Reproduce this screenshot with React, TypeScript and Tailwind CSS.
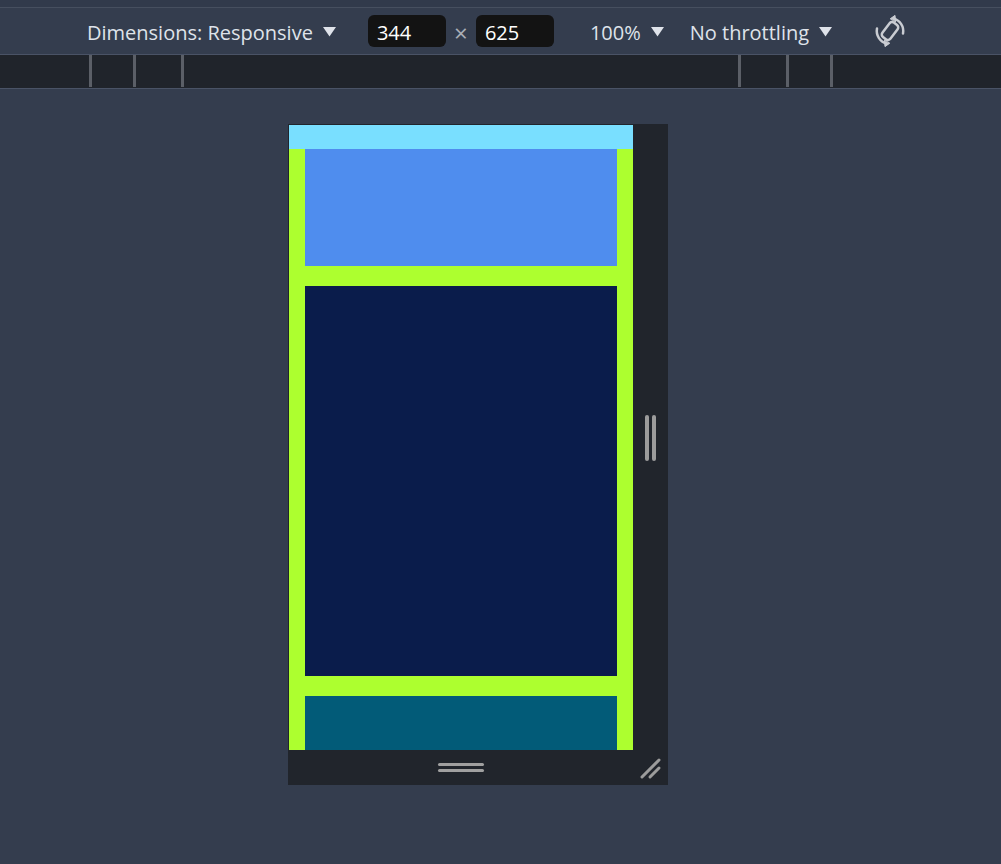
import React from 'react';

const Caret = () => (
  <svg width="13" height="10" viewBox="0 0 13 10" className="ml-[10px] mt-[2px]">
    <path d="M0 0 L13 0 L6.5 9.5 Z" fill="#dfe3ea" />
  </svg>
);

const RotateIcon = () => (
  <svg width="34" height="34" viewBox="0 0 34 34" fill="none" stroke="#c9ccd2" strokeWidth="2.5" strokeLinecap="round">
    {/* phone */}
    <rect x="12" y="8" width="10" height="18" rx="3" transform="rotate(37 17 17)" />
    {/* arrow arcs */}
    <path d="M30 19.5 A13 13 0 0 0 20 4.4" />
    <path d="M17.5 4.6 L22 1.4 L22.6 7.6 Z" fill="#c9ccd2" strokeWidth="1" strokeLinejoin="round" />
    <path d="M4 14.5 A13 13 0 0 0 14 29.6" />
    <path d="M16.5 29.4 L12 32.6 L11.4 26.4 Z" fill="#c9ccd2" strokeWidth="1" strokeLinejoin="round" />
  </svg>
);

const Tick = () => <div className="w-[3px] h-full bg-[#5b5f67]" />;

export default function App() {
  return (
    <div className="w-[1001px] h-[864px] bg-[#343d4e] overflow-hidden font-['Open_Sans','Noto_Sans',sans-serif] text-[#dfe3ea]">
      {/* top strip */}
      <div className="h-[7px] bg-[#313a4b]" />
      <div className="h-px bg-[#464f5f]" />

      {/* toolbar */}
      <div className="h-[47px] flex items-center text-[20px] leading-none border-b border-[#4a5366]">
        <div className="ml-[87px] flex items-center">
          <span className="mt-[4px]">Dimensions: Responsive</span>
          <Caret />
        </div>
        <div className="ml-[32px] w-[78px] h-[32px] rounded-[6px] bg-[#131313] flex items-center pl-[9px] pt-[3px] text-white">344</div>
        <span className="w-[30px] text-center text-[#a9aeb6] text-[24px] mt-[3px]">×</span>
        <div className="w-[78px] h-[32px] rounded-[6px] bg-[#131313] flex items-center pl-[9px] pt-[3px] text-white">625</div>
        <div className="ml-[36px] flex items-center">
          <span className="mt-[4px]">100%</span>
          <Caret />
        </div>
        <div className="ml-[26px] flex items-center">
          <span className="mt-[4px]">No throttling</span>
          <Caret />
        </div>
        <div className="ml-[41px] flex items-center">
          <RotateIcon />
        </div>
      </div>

      {/* ruler */}
      <div className="h-[34px] bg-[#20242b] border-b border-[#4a5366] flex">
        <div className="flex h-[32px]">
          <div className="ml-[89px]"><Tick /></div>
          <div className="ml-[41px]"><Tick /></div>
          <div className="ml-[45px]"><Tick /></div>
          <div className="ml-[554px]"><Tick /></div>
          <div className="ml-[45px]"><Tick /></div>
          <div className="ml-[41px]"><Tick /></div>
        </div>
      </div>

      {/* device frame */}
      <div className="ml-[288px] mt-[35px] w-[380px] border-t border-l border-[#21252c] grid grid-cols-[344px_35px] grid-rows-[625px_35px]">
        <div className="overflow-hidden bg-[#adff2f] flex flex-col">
          <div className="h-[24px] shrink-0 bg-[#79dfff]" />
          <div className="px-[16px] flex flex-col gap-[20px]">
            <div className="h-[117px] bg-[#4f8dee]" />
            <div className="h-[390px] bg-[#0a1c4b]" />
            <div className="h-[120px] bg-[#025b78]" />
          </div>
        </div>
        <div className="bg-[#21252c] flex items-center justify-center gap-[3px]">
          <div className="w-[4px] h-[46px] rounded-[2px] bg-[#9c9c9c]" />
          <div className="w-[4px] h-[46px] rounded-[2px] bg-[#9c9c9c]" />
        </div>
        <div className="bg-[#21252c] flex flex-col items-center justify-center gap-[3px]">
          <div className="w-[46px] h-[3px] rounded-[2px] bg-[#a0a0a0]" />
          <div className="w-[46px] h-[3px] rounded-[2px] bg-[#a0a0a0]" />
        </div>
        <div className="bg-[#21252c] flex items-center justify-center">
          <svg width="24" height="24" viewBox="0 0 24 24" stroke="#9c9c9c" strokeWidth="3" strokeLinecap="round">
            <path d="M3 21 L20 4" />
            <path d="M11 21 L20 12" />
          </svg>
        </div>
      </div>
    </div>
  );
}
